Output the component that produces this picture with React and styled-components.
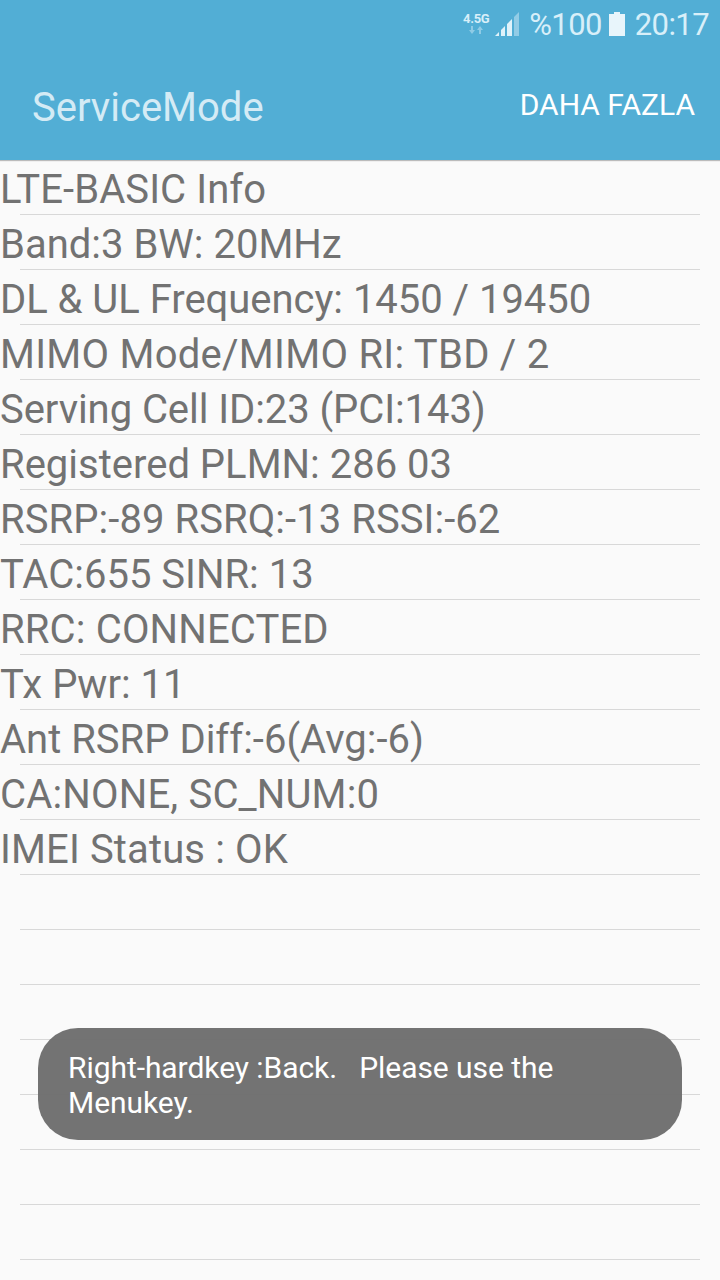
import React from 'react';
import styled, { createGlobalStyle } from 'styled-components';

const GlobalStyle = createGlobalStyle`
	body {
		margin: 0;
		background: #fafafa;
		font-family: Roboto, "Noto Sans", sans-serif;
	}
`;

const Screen = styled.div`
	position: relative;
	width: 720px;
	height: 1280px;
	overflow: hidden;
	background: #fafafa;
`;

const Header = styled.header`
	height: 160px;
	background: #52aed5;
	box-shadow: 0 1px 1px rgba(0, 0, 0, 0.25);
`;

const StatusBar = styled.div`
	display: flex;
	justify-content: flex-end;
	align-items: center;
	height: 50px;
	padding-right: 11px;
	box-sizing: border-box;
	color: #d8eff9;
	font-size: 31px;
	letter-spacing: -0.6px;
	line-height: 50px;
`;

const Network = styled.div`
	display: flex;
	flex-direction: column;
	align-items: center;
	width: 28px;
	margin: -3px 5px 0 0;
	font-size: 13px;
	font-weight: 700;
	letter-spacing: -0.3px;
	line-height: 14px;
`;

const Signal = styled.svg`
	margin: -2px 10px 0 0;
`;

const Battery = styled.svg`
	margin: -2px 10px 0 7px;
`;

const ActionBar = styled.div`
	display: flex;
	justify-content: space-between;
	align-items: center;
	height: 110px;
	padding: 0 25px 0 32px;
`;

const Title = styled.h1`
	margin: 0;
	padding-top: 4px;
	color: #d4ebf5;
	font-size: 40px;
	font-weight: 400;
`;

const MoreButton = styled.button`
	padding: 0 0 2px;
	border: 0;
	background: none;
	color: #fff;
	font-family: inherit;
	font-size: 30px;
`;

const List = styled.ul`
	margin: 0;
	padding: 0;
	list-style: none;
`;

const Row = styled.li`
	height: 55px;
	color: #727272;
	font-size: 40px;
	letter-spacing: ${props => props.$spacing || 0}px;
	line-height: 60px;
	white-space: pre;

	&::after {
		content: "";
		display: block;
		height: 1px;
		margin: 0 20px;
		background: #d8d8d8;
	}
`;

const RowText = styled.div`
	height: 54px;
`;

const Toast = styled.div`
	position: absolute;
	left: 38px;
	top: 1028px;
	width: 644px;
	height: 112px;
	padding: 22px 30px;
	box-sizing: border-box;
	border-radius: 40px;
	background: rgba(109, 109, 109, 0.955);
	color: #fff;
	font-size: 30px;
	letter-spacing: -0.06px;
	line-height: 35px;
	white-space: pre-wrap;
`;

const lines = [
	{ text: 'LTE-BASIC Info', spacing: 0.08 },
	{ text: 'Band:3 BW: 20MHz' },
	{ text: 'DL & UL Frequency: 1450 / 19450', spacing: -0.03 },
	{ text: 'MIMO Mode/MIMO RI: TBD / 2', spacing: 0.27 },
	{ text: 'Serving Cell ID:23 (PCI:143)', spacing: -0.07 },
	{ text: 'Registered PLMN: 286 03' },
	{ text: 'RSRP:-89 RSRQ:-13 RSSI:-62', spacing: 0.06 },
	{ text: 'TAC:655 SINR: 13' },
	{ text: 'RRC: CONNECTED', spacing: 0.15 },
	{ text: 'Tx Pwr: 11' },
	{ text: 'Ant RSRP Diff:-6(Avg:-6)' },
	{ text: 'CA:NONE, SC_NUM:0', spacing: 0.17 },
	{ text: 'IMEI Status : OK', spacing: 0.13 },
	// empty lines of the service menu
	{}, {}, {}, {}, {}, {}, {},
];

export default () => (
	<Screen>
		<GlobalStyle />
		<Header>
			<StatusBar>
				<Network>
					4.5G
					<svg width="14" height="9" viewBox="0 0 14 9" fill="#8fcbe5">
						<path d="M2 0h2v4h2L3 8 0 4h2zM10 8h2V4h2l-3-4-3 4h2z" />
					</svg>
				</Network>
				<Signal width="24" height="24" viewBox="0 0 24 24" fill="#dff2fa">
					<path d="M0 24l4-4v4zM6 18l4-4v10H6zM12 12l5-5v17h-5z" />
					<path d="M19 5l5-5v24h-5z" opacity="0.45" />
				</Signal>
				<span>%100</span>
				<Battery width="16" height="24" viewBox="0 0 16 24" fill="#e8f5fb">
					<path d="M5 0h6v2h5v22H0V2h5z" />
				</Battery>
				<span>20:17</span>
			</StatusBar>
			<ActionBar>
				<Title>ServiceMode</Title>
				<MoreButton>DAHA FAZLA</MoreButton>
			</ActionBar>
		</Header>
		<List>
			{lines.map((line, i) => (
				<Row key={i} $spacing={line.spacing}>
					<RowText>{line.text}</RowText>
				</Row>
			))}
		</List>
		<Toast>{'Right-hardkey :Back.   Please use the Menukey.'}</Toast>
	</Screen>
)
